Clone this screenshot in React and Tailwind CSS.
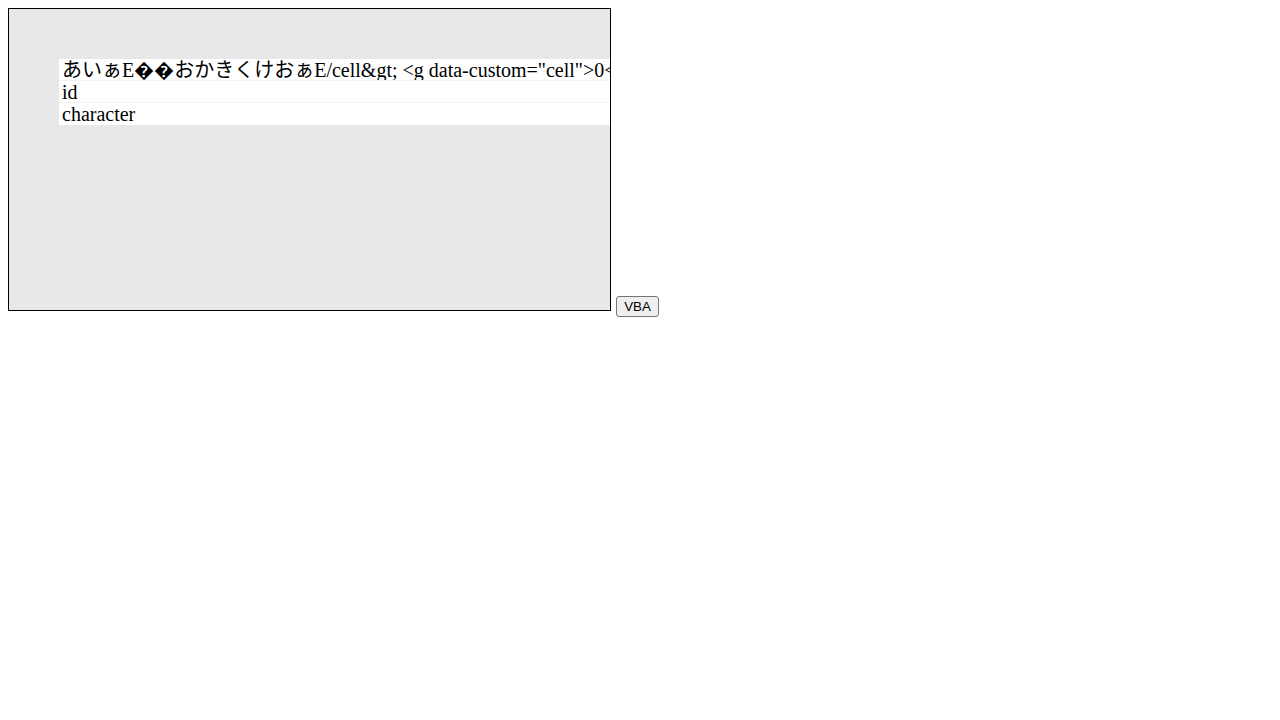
export default function App() {
  const rows = [
    'あいぁE��おかきくけおぁE/cell&gt; <g data-custom="cell">0</g></cell>',
    "id",
    "character",
  ];

  return (
    <div className="p-2 bg-white min-h-[720px]">
      <div className="flex items-end">
        <div className="w-[603px] h-[303px] border border-black bg-[#e8e8e8] overflow-hidden pt-[50px] pl-[50px]">
          <div className="w-[700px] bg-white font-['Liberation_Serif','Noto_Sans_CJK_JP',serif] text-[20px] text-black">
            {rows.map((r, i) => (
              <div
                key={i}
                className={`h-[22px] leading-[22px] pl-[3px] whitespace-nowrap overflow-hidden ${i < rows.length - 1 ? "border-b border-[#f2f2f2]" : ""}`}
              >
                {r}
              </div>
            ))}
          </div>
        </div>
        <button className="ml-[5px] -mb-[6px] w-[43px] h-[21px] border border-[#767676] rounded-[3px] bg-[#efefef] font-['Liberation_Sans',Arial,sans-serif] text-[13.33px] leading-none text-black">
          VBA
        </button>
      </div>
    </div>
  );
}
